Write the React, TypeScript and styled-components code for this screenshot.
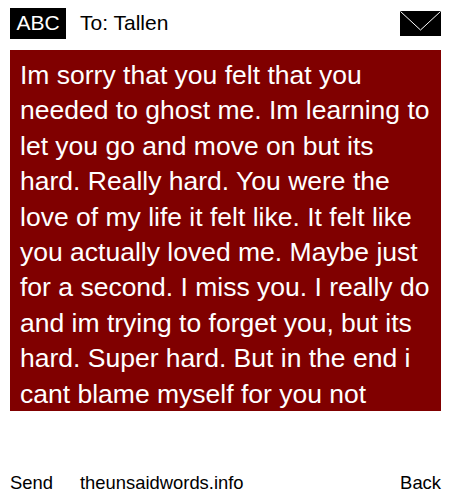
import React from 'react';
import styled, {createGlobalStyle} from 'styled-components';

const GlobalStyle = createGlobalStyle`
  html, body {
    margin: 0;
    padding: 0;
    background: #fff;
    font-family: "Liberation Sans", Arial, sans-serif;
  }
`;

const Page = styled.div`
  width: 450px;
  height: 500px;
  display: flex;
  flex-direction: column;
  padding: 8px 9px 0 10px;
  box-sizing: border-box;
  overflow: hidden;
`;

const Header = styled.header`
  height: 31px;
  display: flex;
  align-items: center;
`;

const Badge = styled.div`
  width: 56px;
  height: 31px;
  background: #000;
  color: #fff;
  font-size: 21px;
  line-height: 29px;
  text-align: center;
`;

const Recipient = styled.div`
  margin-left: 14px;
  padding-bottom: 2px;
  font-size: 21px;
  color: #000;
  flex: 1;
`;

const Envelope = styled.svg`
  display: block;
  width: 41px;
  height: 25px;
`;

const Message = styled.div`
  margin-top: 11px;
  height: 361px;
  background: #800000;
  color: #fff;
  font-size: 26.5px;
  line-height: 35.4px;
  padding: 8px 10px 0;
  box-sizing: border-box;
  overflow: hidden;
`;

const Footer = styled.footer`
  margin-top: 60px;
  display: flex;
  font-size: 18.4px;
  line-height: 24px;
  color: #000;
`;

const SendLink = styled.span`
  width: 70px;
`;

const Site = styled.span`
  flex: 1;
`;

export default function App() {
  return (
    <Page>
      <GlobalStyle />
      <Header>
        <Badge>ABC</Badge>
        <Recipient>To: Tallen</Recipient>
        <Envelope viewBox="0 0 41 25">
          <rect width="41" height="25" fill="#000" />
          <path d="M0.5 0.5 L20.5 19 L40.5 0.5" fill="none" stroke="#fff" strokeWidth="1" />
        </Envelope>
      </Header>
      <Message>
        Im sorry that you felt that you needed to ghost me. Im learning to let you go and move on but its hard. Really hard. You were the love of my life it felt like. It felt like you actually loved me. Maybe just for a second. I miss you. I really do and im trying to forget you, but its hard. Super hard. But in the end i cant blame myself for you not
      </Message>
      <Footer>
        <SendLink>Send</SendLink>
        <Site>theunsaidwords.info</Site>
        <span>Back</span>
      </Footer>
    </Page>
  );
}
